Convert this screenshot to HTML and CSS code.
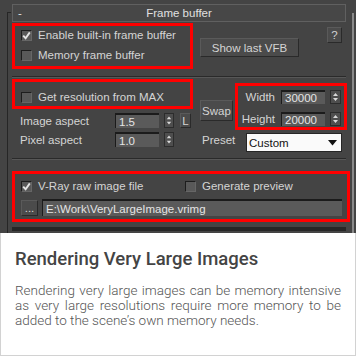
FILE: index.html
```html
<!DOCTYPE html>
<html>
<head>
    <meta name="viewport" content="width=device-width, initial-scale=1.0">
    <link rel="stylesheet" href="styles.css">
</head>
<body>
    <div class="max">
        <div class="gutter"><div class="rail"></div></div>
        <div class="rollout">
            <div class="title"><span class="minus">-</span><span>Frame buffer</span><span></span></div>

            <div class="g1">
                <div class="mark box1">
                    <div class="chk"><span class="cb"><svg width="9" height="9" viewBox="0 0 9 9"><path d="M1.2 4.6 L3.6 7.2 L7.8 1.4" /></svg></span>Enable built-in frame buffer</div>
                    <div class="chk"><span class="cb"></span>Memory frame buffer</div>
                </div>
                <button class="btn vfb">Show last VFB</button>
                <button class="btn help">?</button>
            </div>

            <div class="sep sep1"></div>

            <div class="g2">
                <div class="left">
                    <div class="mark box2">
                        <div class="chk"><span class="cb"></span>Get resolution from MAX</div>
                    </div>
                    <div class="row">
                        <span class="lbl">Image aspect</span>
                        <span class="field">1.5</span>
                        <span class="spin"><svg width="9" height="13" viewBox="0 0 9 13"><path d="M2 5 L4.5 2 L7 5 Z M2 8 L4.5 11 L7 8 Z" /></svg></span>
                        <button class="btn l">L</button>
                    </div>
                    <div class="row">
                        <span class="lbl">Pixel aspect</span>
                        <span class="field">1.0</span>
                        <span class="spin"><svg width="9" height="13" viewBox="0 0 9 13"><path d="M2 5 L4.5 2 L7 5 Z M2 8 L4.5 11 L7 8 Z" /></svg></span>
                    </div>
                </div>
                <div class="right">
                    <div class="top">
                        <button class="btn swap">Swap</button>
                        <div class="mark box3">
                            <div class="row">
                                <span class="lbl">Width</span>
                                <span class="field">30000</span>
                                <span class="spin"><svg width="9" height="12" viewBox="0 0 9 12"><path d="M2 5 L4.5 2 L7 5 Z M2 7 L4.5 10 L7 7 Z" /></svg></span>
                            </div>
                            <div class="row">
                                <span class="lbl">Height</span>
                                <span class="field">20000</span>
                                <span class="spin"><svg width="9" height="12" viewBox="0 0 9 12"><path d="M2 5 L4.5 2 L7 5 Z M2 7 L4.5 10 L7 7 Z" /></svg></span>
                            </div>
                        </div>
                    </div>
                    <div class="preset">
                        <span class="lbl">Preset</span>
                        <div class="select">Custom<svg width="9" height="6" viewBox="0 0 9 6"><path d="M0 0 L9 0 L4.5 5.5 Z" /></svg></div>
                    </div>
                </div>
            </div>

            <div class="sep sep2"></div>

            <div class="mark box4">
                <div class="line">
                    <div class="chk raw"><span class="cb"><svg width="9" height="9" viewBox="0 0 9 9"><path d="M1.2 4.6 L3.6 7.2 L7.8 1.4" /></svg></span>V-Ray raw image file</div>
                    <div class="chk"><span class="cb"></span>Generate preview</div>
                </div>
                <div class="line file">
                    <button class="btn dots">...</button>
                    <span class="field path">E:\Work\VeryLargeImage.vrimg</span>
                </div>
            </div>

            <div class="next"></div>
        </div>
        <div class="scroll"><div class="scroll-bar"></div></div>
    </div>

    <div class="card">
        <h2>Rendering Very Large Images</h2>
        <p>Rendering very large images can be memory intensive as very large resolutions require more memory to be added to the scene’s own memory needs.</p>
    </div>
</body>
</html>
```

FILE: styles.css
```css
* {
    box-sizing: border-box;
}

body {
    margin: 0;
    background: #fff;
    font-family: "Liberation Sans", Arial, sans-serif;
}

/* 3ds Max rollout */
.max {
    display: flex;
    width: 356px;
    height: 233px;
    overflow: hidden;
    background: #444;
    color: #d4d4d4;
    font-size: 11.5px;
}

.gutter {
    width: 12px;
    flex: none;
}

.rail {
    margin: 12px 0 0 7px;
    width: 4px;
    height: 240px;
    border-left: 1px solid #262626;
    border-top: 1px solid #262626;
}

.rollout {
    width: 339px;
    flex: none;
}

.scroll {
    width: 5px;
    flex: none;
}

.scroll-bar {
    margin: 13px 0 0 1px;
    width: 2px;
    height: 240px;
    background: #8a8a8a;
}

.title {
    display: grid;
    grid-template-columns: 1fr auto 1fr;
    align-items: center;
    margin-top: 4px;
    width: 334px;
    height: 18px;
    border: 1px solid #606060;
    background: #474747;
    color: #e0e0e0;
}

.minus {
    padding-left: 5px;
}

.mark {
    border: 3px solid #ff0000;
}

.chk {
    display: flex;
    align-items: center;
    height: 18px;
    white-space: nowrap;
}

.cb {
    display: flex;
    align-items: center;
    justify-content: center;
    width: 11px;
    height: 11px;
    margin-right: 6px;
    background: #595959;
    border-top: 1px solid #1d1d1d;
    border-left: 1px solid #1d1d1d;
    border-right: 1px solid #666;
    border-bottom: 1px solid #666;
}

.cb path {
    fill: none;
    stroke: #e4e4e4;
    stroke-width: 1.9;
}

.btn {
    display: flex;
    align-items: center;
    justify-content: center;
    padding: 0;
    font: inherit;
    color: #d4d4d4;
    background: #4b4b4b;
    border: 1px solid #2a2a2a;
    border-top-color: #5a5a5a;
    border-left-color: #5a5a5a;
}

.field {
    display: flex;
    align-items: center;
    width: 44px;
    height: 15px;
    padding-left: 3px;
    background: #5a5a5a;
    border-top: 2px solid #1b1b1b;
    border-left: 1px solid #1b1b1b;
    color: #e4e4e4;
}

.spin {
    display: flex;
    align-items: center;
    justify-content: center;
    width: 10px;
    height: 15px;
    margin-left: 5px;
    background: #4e4e4e;
    border: 1px solid #2c2c2c;
}

.spin path {
    fill: #d8d8d8;
}

.select path {
    fill: #111;
}

.row {
    display: flex;
    align-items: center;
}

/* top group */
.g1 {
    display: flex;
    align-items: flex-start;
    margin-top: 1px;
}

.box1 {
    display: flex;
    flex-direction: column;
    gap: 2px;
    width: 181px;
    height: 46px;
    padding-left: 6px;
}

.vfb {
    margin: 15px 0 0 7px;
    width: 99px;
    height: 19px;
}

.help {
    margin: 4px 0 0 28px;
    width: 15px;
    height: 16px;
}

.sep {
    width: 334px;
    height: 2px;
    border-top: 1px solid #2a2a2a;
    border-bottom: 1px solid #575757;
}

.sep1 {
    margin-top: 7px;
}

.sep2 {
    margin-top: 6px;
}

/* resolution group */
.g2 {
    display: flex;
    margin-top: 1px;
}

.left {
    width: 181px;
}

.box2 {
    height: 30px;
    padding: 6px 0 0 6px;
}

.left .row {
    height: 15px;
    margin-top: 4px;
    padding-left: 8px;
}

.left .row:first-of-type {
    margin-top: 3px;
}

.left .lbl {
    width: 95px;
}

.l {
    width: 11px;
    height: 15px;
    margin-left: 6px;
}

.right {
    width: 154px;
}

.top {
    display: flex;
    align-items: flex-start;
    margin-top: 4px;
}

.swap {
    margin: 17px 0 0 7px;
    width: 33px;
    height: 21px;
}

.box3 {
    margin-left: 2px;
    width: 112px;
    height: 47px;
    padding-top: 4px;
}

.box3 .row {
    height: 14px;
}

.box3 .row + .row {
    margin-top: 8px;
}

.box3 .lbl {
    width: 37px;
    text-align: right;
}

.box3 .field {
    height: 14px;
    margin-left: 6px;
}

.box3 .spin {
    width: 11px;
    height: 14px;
}

.preset {
    display: flex;
    align-items: flex-start;
    margin-top: 3px;
    padding-left: 9px;
}

.preset .lbl {
    width: 44px;
    line-height: 14px;
}

.select {
    display: flex;
    align-items: center;
    justify-content: space-between;
    width: 96px;
    height: 19px;
    padding: 0 4px 0 2px;
    background: #fafafa;
    border: 1px solid #262626;
    color: #111;
}

/* raw file group */
.box4 {
    margin-top: 11px;
    width: 338px;
    height: 51px;
    padding: 3px 0 0 6px;
}

.line {
    display: flex;
    align-items: center;
}

.raw {
    width: 164px;
}

.file {
    margin-top: 4px;
}

.dots {
    width: 17px;
    height: 16px;
}

.path {
    width: 300px;
    height: 17px;
    margin-left: 4px;
}

.next {
    margin-top: 5px;
    width: 334px;
    height: 4px;
    background: #262626;
}

/* caption card */
.card {
    height: 123px;
    padding: 14px 14px 0 14px;
    border: 1px solid #d2d2d2;
    border-top: none;
    font-family: Roboto, "Noto Sans", sans-serif;
}

.card h2 {
    margin: 0;
    font-size: 18.5px;
    font-weight: 500;
    line-height: 24px;
    color: #444;
}

.card p {
    margin: 12px 0 0;
    font-size: 13.5px;
    font-weight: 300;
    line-height: 15px;
    color: #555;
    text-align: justify;
}
```
